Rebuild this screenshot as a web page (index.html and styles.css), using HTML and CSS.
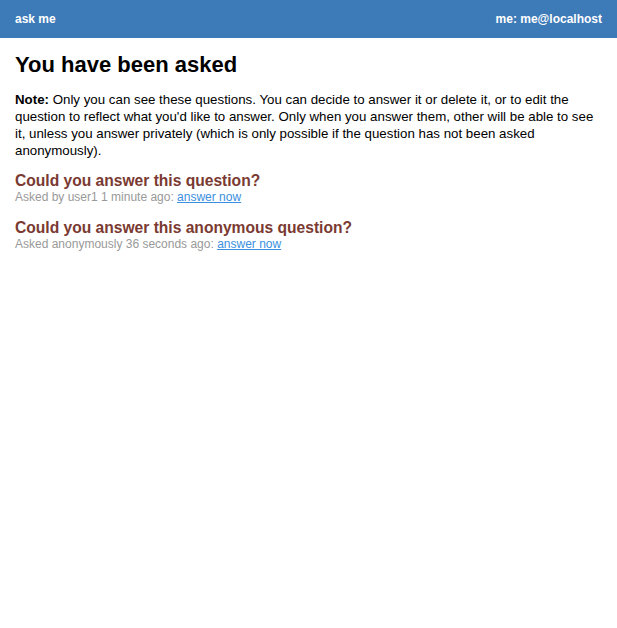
FILE: index.html
```html
<!DOCTYPE html>
<html>
<head>
<meta charset="utf-8">
<link rel="stylesheet" href="styles.css">
</head>
<body>
<header class="topbar">
  <span class="brand">ask me</span>
  <span class="user">me: me@localhost</span>
</header>
<main class="content">
  <h1 class="title">You have been asked</h1>
  <p class="note"><strong>Note:</strong> Only you can see these questions. You can decide to answer it or delete it, or to edit the question to reflect what you'd like to answer. Only when you answer them, other will be able to see it, unless you answer privately (which is only possible if the question has not been asked anonymously).</p>
  <div class="question">
    <h2 class="q-title">Could you answer this question?</h2>
    <div class="q-meta">Asked by user1 1 minute ago: <a href="#">answer now</a></div>
  </div>
  <div class="question">
    <h2 class="q-title">Could you answer this anonymous question?</h2>
    <div class="q-meta">Asked anonymously 36 seconds ago: <a href="#">answer now</a></div>
  </div>
</main>
</body>
</html>
```
FILE: styles.css
```css
html, body {
  margin: 0;
  padding: 0;
  background: #fff;
  font-family: "Liberation Sans", Arial, sans-serif;
  color: #000;
}
.topbar {
  height: 38px;
  background: #3d7ab8;
  color: #fff;
  display: flex;
  align-items: center;
  justify-content: space-between;
  padding: 0 15px;
  font-size: 12px;
  font-weight: bold;
}
.content {
  padding: 0 15px;
}
.title {
  margin: 14px 0 0;
  font-size: 22px;
  line-height: 26px;
  font-weight: bold;
}
.note {
  margin: 13px 0 0;
  font-size: 13.3px;
  line-height: 17px;
}
.question {
  margin-top: 12px;
}
.question + .question {
  margin-top: 14px;
}
.q-title {
  margin: 0;
  font-size: 15.6px;
  line-height: 19px;
  color: #7a3a32;
}
.q-meta {
  font-size: 12px;
  line-height: 14px;
  color: #999;
}
.q-meta a {
  color: #3a8fe0;
  text-decoration: underline;
}
```
